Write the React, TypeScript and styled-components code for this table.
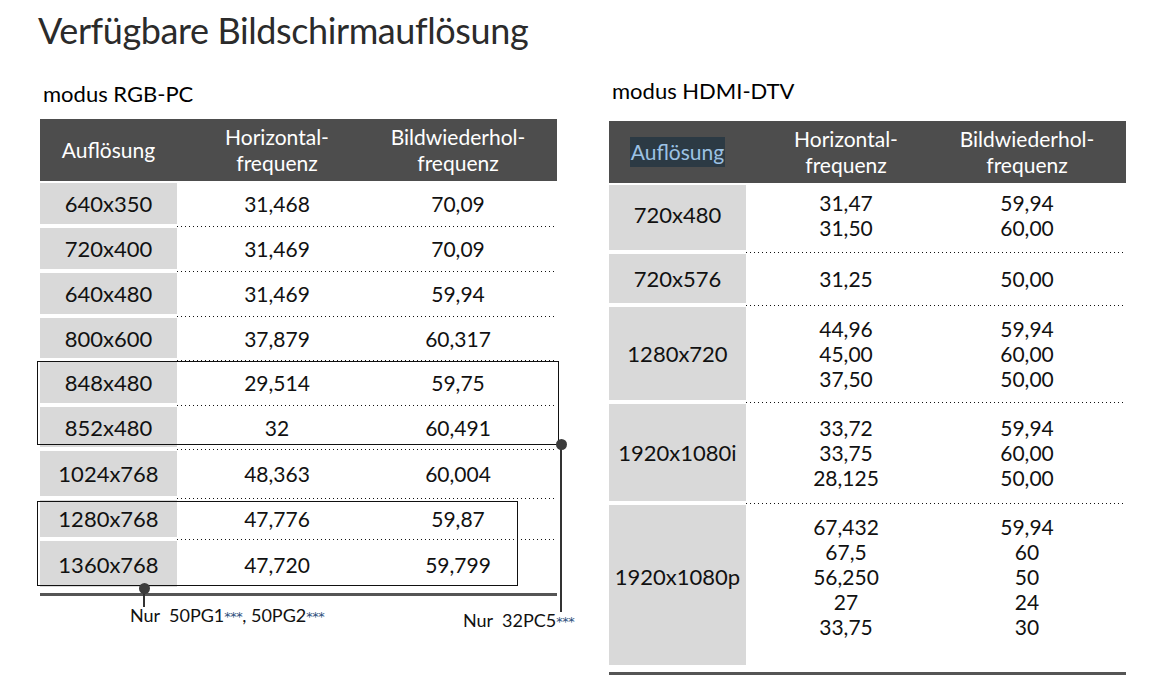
import styled, { createGlobalStyle } from "styled-components";

const GlobalStyle = createGlobalStyle`
  html, body {
    margin: 0;
    padding: 0;
    background: #fff;
  }
  body {
    font-family: Lato, "Liberation Sans", sans-serif;
    color: #111;
  }
`;

const Page = styled.div`
  width: 1149px;
  height: 697px;
  box-sizing: border-box;
  padding: 11px 0 0 38px;
  overflow: hidden;
`;

const Title = styled.h1`
  margin: 0;
  font-size: 36px;
  line-height: 38px;
  letter-spacing: -0.4px;
  font-weight: 400;
  color: #2b2b2b;
`;

const Columns = styled.div`
  display: flex;
  align-items: flex-start;
  gap: 52px;
  margin-left: 2px;
`;

const Section = styled.section<{ $top: number }>`
  width: 517px;
  padding-top: ${(p) => p.$top}px;
`;

const ModeTitle = styled.h2<{ $gap: number }>`
  margin: 0 0 ${(p) => p.$gap}px;
  padding-left: 3px;
  font-size: 22px;
  line-height: 24px;
  font-weight: 400;
  color: #000;
`;

const TableWrap = styled.div`
  position: relative;
`;

const HeadRow = styled.div`
  display: grid;
  grid-template-columns: 137px 200px 162px 18px;
  align-items: center;
  height: 62px;
  background: #4d4d4d;
  color: #fff;
  font-size: 21px;
  line-height: 26px;
  text-align: center;
`;

const Selected = styled.span`
  background: #2c3a44;
  color: #9cc2e4;
  padding: 2px 1px 3px;
`;

const Body = styled.div`
  padding-top: 2px;
`;

const Row = styled.div<{ $h: number }>`
  display: grid;
  grid-template-columns: 137px 1fr;
  height: ${(p) => p.$h}px;
`;

const Label = styled.div<{ $last?: boolean; $pad: number }>`
  display: flex;
  align-items: center;
  justify-content: center;
  margin-bottom: ${(p) => (p.$last ? 0 : 4)}px;
  padding-bottom: ${(p) => p.$pad}px;
  background: #d9d9d9;
  font-size: 22px;
`;

const Values = styled.div<{ $last?: boolean; $pad: number }>`
  display: grid;
  grid-template-columns: 200px 162px 18px;
  align-items: center;
  padding-bottom: ${(p) => (p.$last ? 0 : 4) + p.$pad}px;
  text-align: center;
  font-size: 21px;
  line-height: 25px;
  background: ${(p) =>
    p.$last
      ? "none"
      : "linear-gradient(to right, #111 1px, transparent 1px) 0 calc(100% - 1px) / 4px 1px repeat-x"};
`;

const Rule = styled.div<{ $gap: number }>`
  margin-top: ${(p) => p.$gap}px;
  height: 3px;
  background: #555;
`;

const Frame = styled.div<{ $top: number; $width: number; $height: number }>`
  position: absolute;
  left: -3px;
  top: ${(p) => p.$top}px;
  width: ${(p) => p.$width}px;
  height: ${(p) => p.$height}px;
  box-sizing: border-box;
  border: 1.5px solid #111;
  pointer-events: none;
`;

const Pin = styled.div<{ $x: number; $y: number; $len: number }>`
  position: absolute;
  left: ${(p) => p.$x}px;
  top: ${(p) => p.$y}px;
  width: 0;
  height: 0;
  &::after {
    content: "";
    position: absolute;
    left: -0.75px;
    top: 0;
    width: 1.5px;
    height: ${(p) => p.$len}px;
    background: #333;
  }
  &::before {
    content: "";
    position: absolute;
    left: -5.5px;
    top: -5.5px;
    width: 11px;
    height: 11px;
    border-radius: 50%;
    background: #3c3c3c;
    z-index: 1;
  }
`;

const Notes = styled.div`
  display: grid;
  grid-template-columns: 423px auto;
  align-items: start;
  font-size: 18px;
  line-height: 20px;
  color: #111;
`;

const Note = styled.div<{ $left: number; $top: number }>`
  padding-left: ${(p) => p.$left}px;
  margin-top: ${(p) => p.$top}px;
  white-space: pre;
`;

const Stars = styled.span`
  font-family: "DejaVu Sans", sans-serif;
  font-size: 13px;
  color: #2d4f7c;
  letter-spacing: -0.5px;
  vertical-align: 1px;
`;

type Entry = { res: string; h: string[]; v: string[]; height: number; pad?: number };

const rgb: Entry[] = [
  { res: "640x350", h: ["31,468"], v: ["70,09"], height: 45 },
  { res: "720x400", h: ["31,469"], v: ["70,09"], height: 45 },
  { res: "640x480", h: ["31,469"], v: ["59,94"], height: 45 },
  { res: "800x600", h: ["37,879"], v: ["60,317"], height: 44 },
  { res: "848x480", h: ["29,514"], v: ["59,75"], height: 45 },
  { res: "852x480", h: ["32"], v: ["60,491"], height: 44 },
  { res: "1024x768", h: ["48,363"], v: ["60,004"], height: 49 },
  { res: "1280x768", h: ["47,776"], v: ["59,87"], height: 41 },
  { res: "1360x768", h: ["47,720"], v: ["59,799"], height: 46 },
];

const hdmi: Entry[] = [
  { res: "720x480", h: ["31,47", "31,50"], v: ["59,94", "60,00"], height: 69, pad: 6 },
  { res: "720x576", h: ["31,25"], v: ["50,00"], height: 53 },
  { res: "1280x720", h: ["44,96", "45,00", "37,50"], v: ["59,94", "60,00", "50,00"], height: 97 },
  { res: "1920x1080i", h: ["33,72", "33,75", "28,125"], v: ["59,94", "60,00", "50,00"], height: 101 },
  {
    res: "1920x1080p",
    h: ["67,432", "67,5", "56,250", "27", "33,75"],
    v: ["59,94", "60", "50", "24", "30"],
    height: 160,
    pad: 18,
  },
];

const Lines = ({ items }: { items: string[] }) => (
  <div>
    {items.map((t, i) => (
      <div key={i}>{t}</div>
    ))}
  </div>
);

const Table = ({ rows, selected }: { rows: Entry[]; selected?: boolean }) => (
  <>
    <HeadRow>
      <div>{selected ? <Selected>Auflösung</Selected> : "Auflösung"}</div>
      <div>
        Horizontal-
        <br />
        frequenz
      </div>
      <div>
        Bildwiederhol-
        <br />
        frequenz
      </div>
    </HeadRow>
    <Body>
      {rows.map((r, i) => {
        const last = i === rows.length - 1;
        return (
          <Row key={r.res} $h={r.height}>
            <Label $last={last} $pad={r.pad ?? 0}>
              {r.res}
            </Label>
            <Values $last={last} $pad={r.pad ?? 0}>
              <Lines items={r.h} />
              <Lines items={r.v} />
            </Values>
          </Row>
        );
      })}
    </Body>
  </>
);

export default function App() {
  return (
    <Page>
      <GlobalStyle />
      <Title>Verfügbare Bildschirmauflösung</Title>
      <Columns>
        <Section $top={33}>
          <ModeTitle $gap={13}>modus RGB-PC</ModeTitle>
          <TableWrap>
            <Table rows={rgb} />
            <Rule $gap={6} />
            <Frame $top={242} $width={522} $height={84} />
            <Frame $top={382} $width={481} $height={85} />
            <Pin $x={521} $y={325} $len={168} />
            <Pin $x={104} $y={469} $len={19} />
          </TableWrap>
          <Notes>
            <Note $left={90} $top={9}>
              Nur  50PG1<Stars>***</Stars>, 50PG2<Stars>***</Stars>
            </Note>
            <Note $left={0} $top={14}>
              Nur  32PC5<Stars>***</Stars>
            </Note>
          </Notes>
        </Section>
        <Section $top={30}>
          <ModeTitle $gap={18}>modus HDMI-DTV</ModeTitle>
          <TableWrap>
            <Table rows={hdmi} selected />
            <Rule $gap={7} />
          </TableWrap>
        </Section>
      </Columns>
    </Page>
  );
}
